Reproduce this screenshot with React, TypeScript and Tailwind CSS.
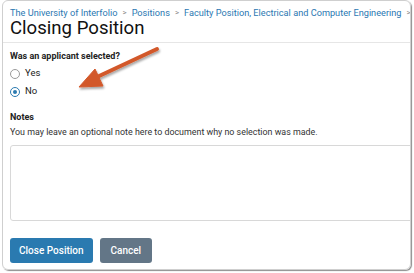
import React from "react";

const crumbs = [
  "The University of Interfolio",
  "Positions",
  "Faculty Position, Electrical and Computer Engineering",
];

const Radio = ({ checked, label }: { checked?: boolean; label: string }) => (
  <label className="flex items-center gap-[5px] h-[17px]">
    <span
      className={
        checked
          ? "w-[10px] h-[10px] rounded-full border border-[#2a7ab0] flex items-center justify-center"
          : "w-[10px] h-[10px] rounded-full border border-[#9a9a9a]"
      }
    >
      {checked && <span className="w-[4px] h-[4px] rounded-full bg-[#2a7ab0]" />}
    </span>
    <span className="text-[9.5px] text-[#222]">{label}</span>
  </label>
);

export default function App() {
  return (
    <div className="w-[414px] h-[273px] bg-white relative font-['Roboto',sans-serif]">
      <div className="ml-[2px] w-[409px] h-[270px] border border-[#cfcfcf] rounded-[6px] shadow-[1px_1px_1px_rgba(0,0,0,0.45)] overflow-hidden">
        {/* Header */}
        <div className="px-[7px] pt-[5px] pb-[5px] border-b border-[#e6e6e6]">
          <div className="flex items-center gap-[5px] text-[9.2px] leading-[13px] text-[#2b78b2] whitespace-nowrap">
            {crumbs.map((c) => (
              <React.Fragment key={c}>
                <span>{c}</span>
                <span className="text-[#888] text-[8px]">&gt;</span>
              </React.Fragment>
            ))}
          </div>
          <h1 className="text-[18.6px] leading-[18px] text-[#111]">Closing Position</h1>
        </div>

        {/* Body */}
        <div className="px-[7px] pt-[6px]">
          <p className="text-[9px] leading-[14px] font-bold text-[#222]">Was an applicant selected?</p>
          <div className="mt-[2px] flex flex-col gap-[1px]">
            <Radio label="Yes" />
            <Radio label="No" checked />
          </div>

          <p className="mt-[10px] text-[9px] leading-[14px] font-bold text-[#222]">Notes</p>
          <p className="mt-[1px] text-[8.9px] leading-[14px] text-[#333]">
            You may leave an optional note here to document why no selection was made.
          </p>
          <div className="mt-[6px] w-[420px] h-[76px] border border-[#d8d8d8] rounded-[3px]" />

          <div className="mt-[17px] flex gap-[7px]">
            <button className="h-[25px] px-[9px] rounded-[3px] bg-[#2a7ab0] text-white text-[10px] font-medium">
              Close Position
            </button>
            <button className="h-[25px] px-[11px] rounded-[3px] bg-[#637687] text-white text-[10px] font-medium">
              Cancel
            </button>
          </div>
        </div>
      </div>

      {/* Annotation arrow */}
      <svg className="absolute left-0 top-0 pointer-events-none" width="414" height="273">
        <defs>
          <filter id="sh" x="-20%" y="-20%" width="140%" height="140%">
            <feDropShadow dx="1" dy="2" stdDeviation="1.2" floodColor="#000" floodOpacity="0.35" />
          </filter>
        </defs>
        <g filter="url(#sh)" fill="#d2592c" stroke="#d2592c">
          <line x1="157" y1="49" x2="97" y2="77" strokeWidth="4" strokeLinecap="round" />
          <polygon points="79,87 95,69 103,86" strokeWidth="1" strokeLinejoin="round" />
        </g>
      </svg>
    </div>
  );
}
